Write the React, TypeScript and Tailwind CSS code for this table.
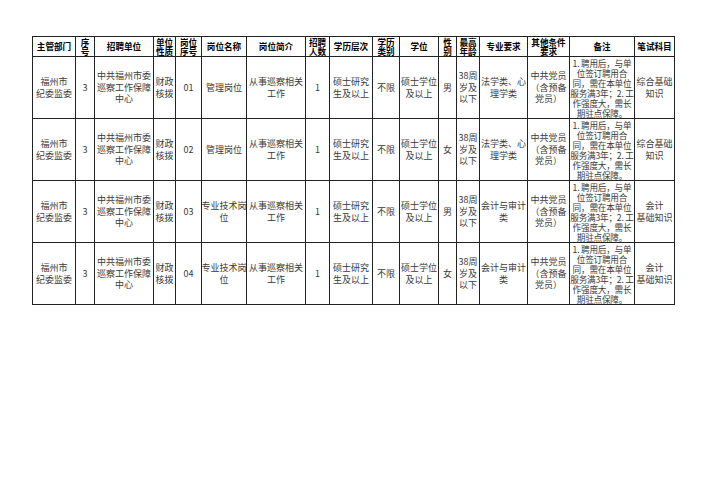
import React from "react";

const headers: string[] = [
  "主管部门",
  "序\n号",
  "招聘单位",
  "单位\n性质",
  "岗位\n序号",
  "岗位名称",
  "岗位简介",
  "招聘\n人数",
  "学历层次",
  "学历\n类别",
  "学位",
  "性\n别",
  "最高\n年龄",
  "专业要求",
  "其他条件\n要求",
  "备注",
  "笔试科目",
];

const remark =
  "1. 聘用后，与单\n位签订聘用合\n同，需在本单位\n服务满3年；2. 工\n作强度大，需长\n期驻点保障。";

function row(no: string, post: string, sex: string, major: string, exam: string): string[] {
  return [
    "福州市\n纪委监委",
    "3",
    "中共福州市委\n巡察工作保障\n中心",
    "财政\n核拨",
    no,
    post,
    "从事巡察相关\n工作",
    "1",
    "硕士研究\n生及以上",
    "不限",
    "硕士学位\n及以上",
    sex,
    "38周\n岁及\n以下",
    major,
    "中共党员\n（含预备\n党员）",
    remark,
    exam,
  ];
}

const rows: string[][] = [
  row("01", "管理岗位", "男", "法学类、心\n理学类", "综合基础\n知识"),
  row("02", "管理岗位", "女", "法学类、心\n理学类", "综合基础\n知识"),
  row("03", "专业技术岗\n位", "男", "会计与审计\n类", "会计\n基础知识"),
  row("04", "专业技术岗\n位", "女", "会计与审计\n类", "会计\n基础知识"),
];

export default function App() {
  return (
    <div className="w-[707px] h-[500px] bg-white font-['Noto_Sans_CJK_SC','Noto_Sans',sans-serif] pt-[36px] pl-[32px]">
      <div className="grid w-[643px] grid-cols-[43px_19px_59px_22px_26px_45px_59px_24px_43px_27px_39px_18px_23px_48px_42px_65px_40px] grid-rows-[20px_62px_62px_62px_62px] border-l border-t border-[#222]">
        {headers.map((h, i) => (
          <div
            key={"h" + i}
            className="border-r border-b border-[#222] flex items-center justify-center text-center overflow-hidden whitespace-pre text-[8.6px] leading-[9px] font-bold text-black"
          >
            {h}
          </div>
        ))}
        {rows.map((r, ri) =>
          r.map((c, ci) => (
            <div
              key={ri + "-" + ci}
              className={
                "border-r border-b border-[#222] flex items-center justify-center text-center overflow-hidden whitespace-pre text-[#3a3a3a] " +
                (ci === 15
                  ? "text-[8.6px] leading-[10px] tracking-[-0.2px]"
                  : "text-[9px] leading-[11.5px]")
              }
            >
              {c}
            </div>
          ))
        )}
      </div>
    </div>
  );
}
